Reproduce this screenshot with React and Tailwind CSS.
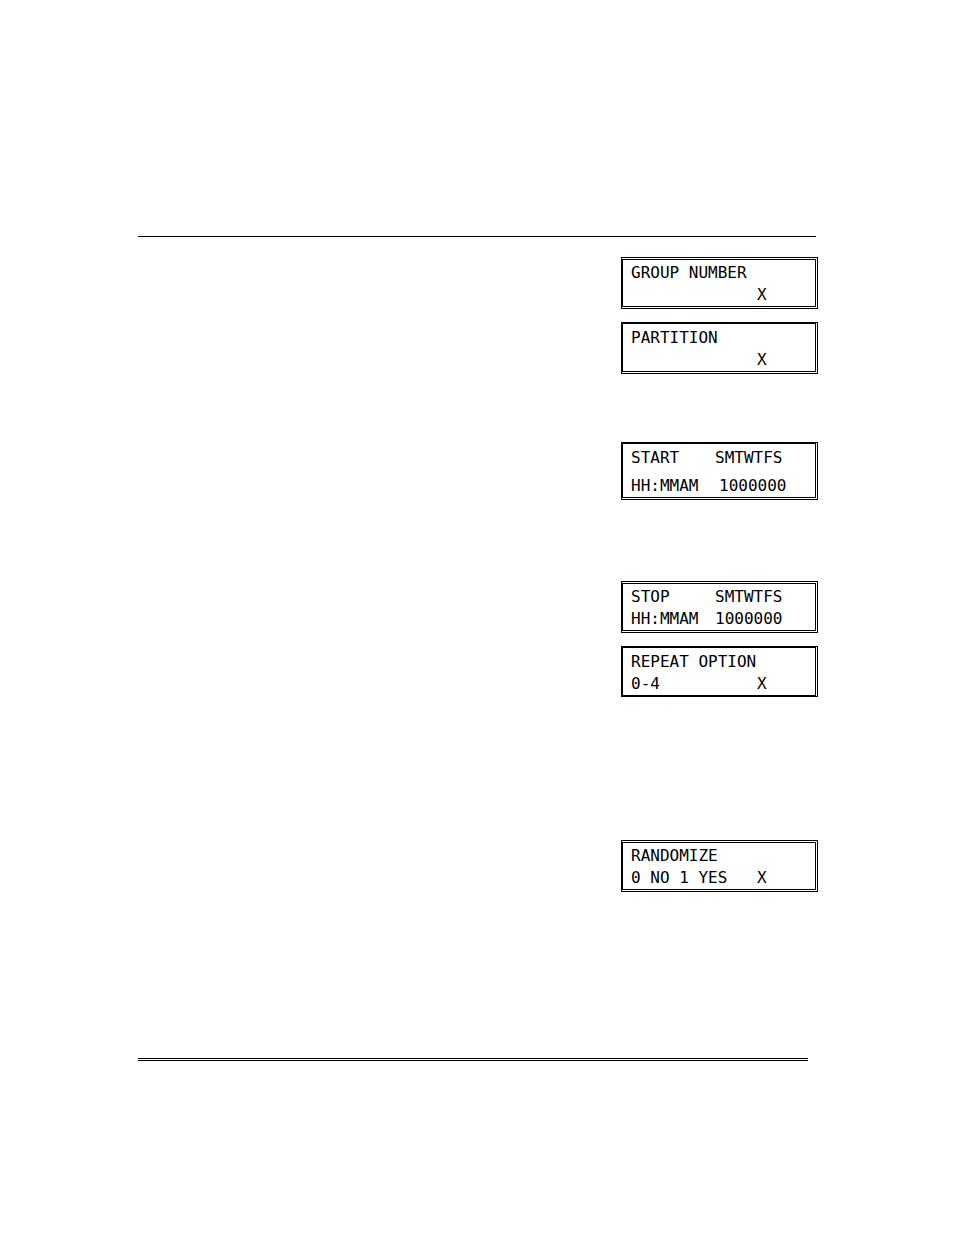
import clsx from 'clsx';

// Each screen is a two line keypad display
const screens = [
  {
    id: 'group',
    frame: 'mt-5 border-t-3 border-b-3 pt-0.5 [border-style:double_double_double_solid]',
    lines: [{ label: 'GROUP NUMBER' }, { entry: 'X' }],
  },
  {
    id: 'partition',
    frame: 'mt-[13px] border-t-2 border-b-3 pt-[3px] [border-style:solid_double_double_solid]',
    lines: [{ label: 'PARTITION' }, { entry: 'X' }],
  },
  {
    id: 'start',
    frame: 'mt-[68px] gap-1.5 border-t-2 border-b-3 pt-[3px] [border-style:solid_double_double_solid]',
    lines: [
      { label: 'START', days: 'SMTWTFS' },
      { label: 'HH:MMAM', days: '1000000', indent: true },
    ],
  },
  {
    id: 'stop',
    frame: 'mt-[81px] border-t-3 border-b-3 pt-0.5 [border-style:double_double_double_solid]',
    lines: [
      { label: 'STOP', days: 'SMTWTFS' },
      { label: 'HH:MMAM', days: '1000000' },
    ],
  },
  {
    id: 'repeat',
    frame: 'mt-[13px] border-t-2 border-b-2 pt-[3px] [border-style:solid_double_solid_solid]',
    lines: [{ label: 'REPEAT OPTION' }, { label: '0-4', entry: 'X' }],
  },
  {
    id: 'randomize',
    frame: 'mt-[143px] border-t-3 border-b-3 pt-0.5 [border-style:double_double_double_solid]',
    lines: [{ label: 'RANDOMIZE' }, { label: '0 NO 1 YES', entry: 'X' }],
  },
];

const Line = ({ label, days, entry, indent }) => {
  // the label keeps to the first column only when the weekday flags follow it
  return (
    <p className="grid grid-cols-[84px_42px_1fr] whitespace-nowrap">
      <span className={clsx('col-start-1', !days && !entry && 'col-span-3', entry && 'col-span-2')}>
        {label}
      </span>
      {days && (
        <span className={clsx('col-span-2 col-start-2', indent && 'pl-1')}>{days}</span>
      )}
      {entry && <span className="col-start-3">{entry}</span>}
    </p>
  );
};

const Screen = ({ frame, lines }) => {
  return (
    <section
      className={clsx(
        'flex w-[197px] flex-col self-end border-r-3 border-l-2 border-black pl-2',
        frame
      )}
    >
      {lines.map((line, index) => (
        <Line key={index} {...line} />
      ))}
    </section>
  );
};

const App = () => {
  return (
    <div className="min-h-screen bg-white pt-[236px] pr-[136px] pb-[174px] pl-[138px] font-['DejaVu_Sans_Mono',monospace] text-[16px] leading-[22px] text-black">
      <hr className="mr-0.5 border-t border-black" />
      <main className="flex flex-col">
        {screens.map((screen) => (
          <Screen key={screen.id} frame={screen.frame} lines={screen.lines} />
        ))}
      </main>
      <hr className="mt-[166px] mr-2.5 border-t-3 border-double border-black" />
    </div>
  );
};

export default App;
